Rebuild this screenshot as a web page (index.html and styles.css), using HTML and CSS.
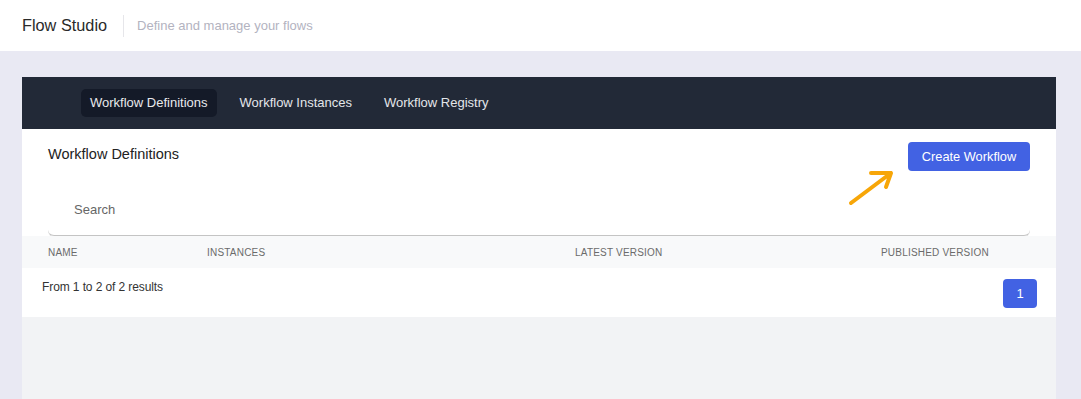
FILE: index.html
```html
<!DOCTYPE html>
<html>
<head>
<meta charset="utf-8">
<link rel="stylesheet" href="styles.css">
</head>
<body>
<header class="topbar">
  <span class="brand">Flow Studio</span>
  <span class="divider"></span>
  <span class="tagline">Define and manage your flows</span>
</header>
<main class="page">
  <section class="card">
    <nav class="tabs">
      <a class="tab active">Workflow Definitions</a>
      <a class="tab">Workflow Instances</a>
      <a class="tab">Workflow Registry</a>
    </nav>
    <div class="panel">
      <div class="panel-head">
        <h2 class="title">Workflow Definitions</h2>
        <div class="action">
          <svg class="arrow" width="50" height="40" viewBox="0 0 50 40">
            <path d="M6 35 L46 5 M26 5 L46 5 L41 19" fill="none" stroke="#f7a608" stroke-width="4" stroke-linecap="round" stroke-linejoin="round"/>
          </svg>
          <button class="btn-primary">Create Workflow</button>
        </div>
      </div>
      <div class="search">Search</div>
    </div>
    <div class="thead">
      <span>Name</span>
      <span>Instances</span>
      <span>Latest Version</span>
      <span>Published Version</span>
    </div>
    <div class="footer">
      <span class="results">From 1 to 2 of 2 results</span>
      <button class="page-btn">1</button>
    </div>
    <div class="empty"></div>
  </section>
</main>
</body>
</html>
```
FILE: styles.css
```css
* { box-sizing: border-box; }
html, body { margin: 0; padding: 0; }
body {
  font-family: "Liberation Sans", Arial, sans-serif;
  background: #e9e9f3;
  height: 399px;
  overflow: hidden;
}
.topbar {
  height: 51px;
  background: #ffffff;
  display: flex;
  align-items: center;
  padding-left: 22px;
}
.brand {
  font-size: 16.3px;
  color: #2a2a2a;
}
.divider {
  width: 1px;
  height: 22px;
  background: #e6e6ea;
  margin: 0 13px 0 16px;
}
.tagline {
  font-size: 13px;
  color: #b3b3bf;
}
.page {
  padding: 26px 25px 0 22px;
}
.card {
  background: #f2f3f5;
  height: 330px;
}
.tabs {
  height: 52px;
  background: #222937;
  display: flex;
  align-items: center;
  padding-left: 59px;
  gap: 14px;
}
.tab {
  font-size: 13px;
  color: #e4e6ea;
  padding: 7px 9px;
  border-radius: 5px;
  line-height: 14px;
}
.tab.active {
  background: #141a28;
  color: #e8e9ec;
}
.panel {
  background: #fff;
  padding: 13px 26px 0 26px;
}
.panel-head {
  display: flex;
  justify-content: space-between;
  align-items: flex-start;
}
.title {
  margin: 4px 0 0 0;
  font-size: 14.5px;
  font-weight: normal;
  color: #222;
}
.action {
  display: flex;
  align-items: flex-start;
}
.arrow {
  margin-top: 26px;
  margin-right: 13px;
}
.btn-primary {
  background: #4262e3;
  color: #fff;
  border: none;
  border-radius: 4px;
  font-family: inherit;
  font-size: 12.8px;
  height: 29px;
  padding: 0 10px;
  width: 122px;
}
.search {
  height: 34px;
  padding-left: 26px;
  font-size: 13px;
  color: #666;
  border-bottom: 1px solid #c4c4c4;
  border-radius: 0 0 6px 6px;
  box-shadow: 0 1px 0 #e2e2e2;
  margin-top: -6px;
}
.thead {
  height: 32px;
  background: #f8f9fa;
  display: grid;
  grid-template-columns: 159px 368px 306px 1fr;
  align-items: center;
  padding-left: 26px;
  font-size: 10px;
  text-transform: uppercase;
  color: #6b6b6b;
  letter-spacing: 0.2px;
}
.footer {
  background: #fff;
  height: 49px;
  display: flex;
  justify-content: space-between;
  align-items: flex-start;
  padding: 11px 19px 0 20px;
}
.results {
  font-size: 12px;
  color: #333;
  letter-spacing: -0.1px;
  margin-top: 1px;
}
.page-btn {
  width: 34px;
  height: 29px;
  background: #4262e3;
  color: #fff;
  border: none;
  border-radius: 4px;
  font-family: inherit;
  font-size: 13px;
}
.empty {
  background: #f2f3f5;
}
```
